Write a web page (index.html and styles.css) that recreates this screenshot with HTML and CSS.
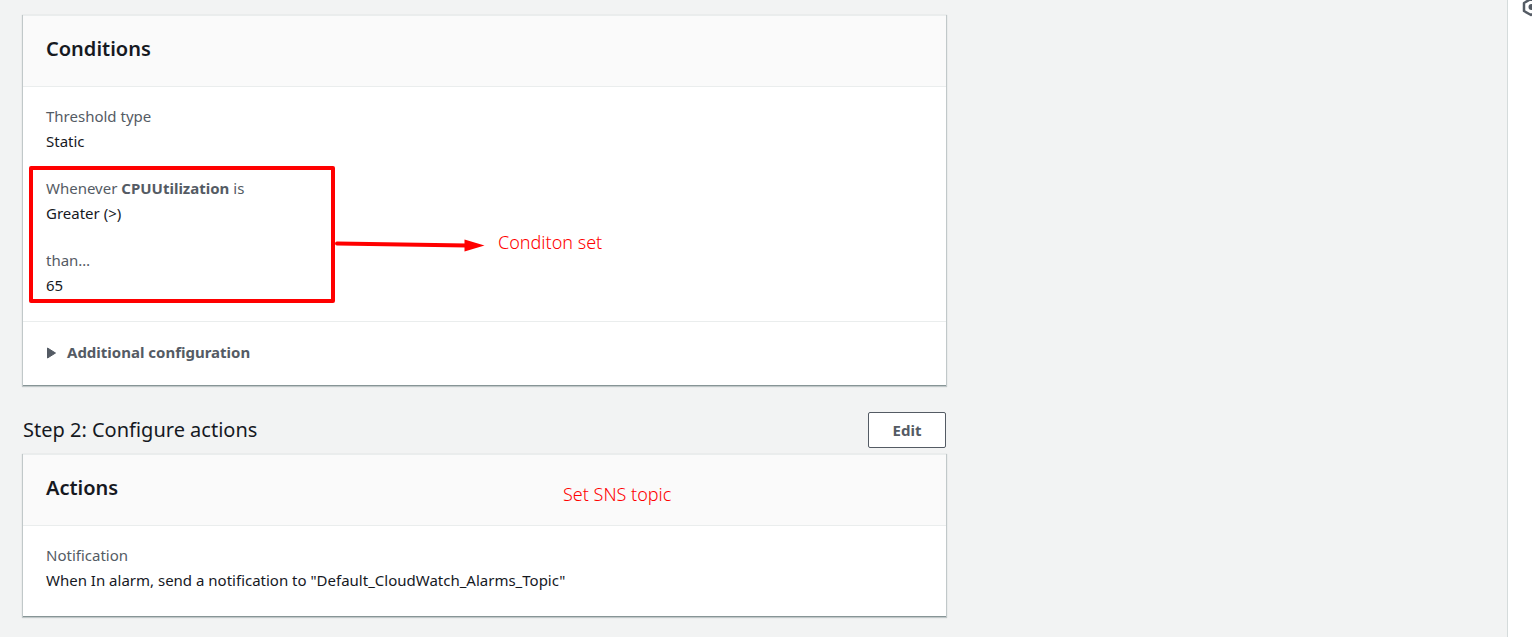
FILE: index.html
```html
<!DOCTYPE html>
<html lang="en">
<head>
<meta charset="utf-8">
<meta name="viewport" content="width=device-width, initial-scale=1">
<title>Create alarm - Preview</title>
<link rel="stylesheet" href="styles.css">
</head>
<body>
<div class="app">
  <main class="main">
    <div class="content">
      <section class="card">
        <header class="card-header"><h3 class="card-title">Conditions</h3></header>
        <div class="card-body">
          <dl class="field">
            <dt>Threshold type</dt>
            <dd>Static</dd>
          </dl>
          <div class="marked">
            <dl class="field">
              <dt>Whenever <strong>CPUUtilization</strong> is</dt>
              <dd>Greater (&gt;)</dd>
            </dl>
            <dl class="field">
              <dt>than…</dt>
              <dd>65</dd>
            </dl>
            <div class="mark-box"></div>
            <div class="callout">
              <svg class="arrow" width="150" height="16" viewBox="0 0 150 16" aria-hidden="true">
                <path d="M2 6.5 L132 8.5" stroke="#f00" stroke-width="4" stroke-linecap="round"/>
                <path d="M129.500 2.500 L149.500 8.500 L129.500 14.500 Z" fill="#f00"/>
              </svg>
              <span class="note">Conditon set</span>
            </div>
          </div>
        </div>
        <div class="card-footer">
          <button class="expander" type="button" aria-expanded="false">
            <svg width="10" height="12" viewBox="0 0 10 12" aria-hidden="true"><path d="M1.500 1 L9.500 6 L1.500 11 Z" fill="#545b64" stroke="#545b64" stroke-linejoin="round"/></svg>
            Additional configuration
          </button>
        </div>
      </section>

      <div class="step">
        <h2 class="step-title">Step 2: Configure actions</h2>
        <button class="button" type="button">Edit</button>
      </div>

      <section class="card">
        <header class="card-header">
          <h3 class="card-title">Actions</h3>
          <span class="note note-topic">Set SNS topic</span>
        </header>
        <div class="card-body">
          <dl class="field">
            <dt>Notification</dt>
            <dd>When In alarm, send a notification to "Default_CloudWatch_Alarms_Topic"</dd>
          </dl>
        </div>
      </section>
    </div>
  </main>
  <aside class="rail">
    <button class="rail-button" type="button" aria-label="Settings">
      <svg width="20" height="20" viewBox="0 0 20 20" fill="none" aria-hidden="true">
        <path d="M10 2 L17 6 V14 L10 18 L3 14 V6 Z" stroke="#545b64" stroke-width="2.500" stroke-linejoin="round"/>
        <circle cx="10.500" cy="10" r="3" fill="#545b64"/>
      </svg>
    </button>
  </aside>
</div>
</body>
</html>
```
FILE: styles.css
```css
* {
  box-sizing: border-box;
}

body {
  margin: 0;
  background: #f2f3f3;
  color: #16191f;
  font: 15px/25px "Noto Sans", "Open Sans", sans-serif;
  overflow: hidden;
}

h2, h3, dl, dd {
  margin: 0;
}

button {
  font: inherit;
  cursor: pointer;
}

.app {
  display: flex;
  min-height: 100vh;
}

.main {
  flex: 1;
  display: grid;
  grid-template-columns: 923fr 538fr;
  padding: 15px 23px 20px;
}

.card {
  background: #fff;
  box-shadow: 0 1px 0 0 #879596, 0 1px 1px 1px rgba(0, 28, 36, 0.2);
  border-top: 1px solid #eaeded;
}

.card-header {
  position: relative;
  padding: 19px 23px 23px;
  background: #fafafa;
  border-bottom: 1px solid #eaeded;
}

.card-title {
  font-size: 20px;
  line-height: 28px;
  font-weight: 600;
}

.card-body {
  display: flex;
  flex-direction: column;
  gap: 22px;
  padding: 17px 23px 23px;
}

.field dt {
  color: #545b64;
}

.marked {
  position: relative;
  display: flex;
  flex-direction: column;
  gap: 22px;
}

.mark-box {
  position: absolute;
  left: -17px;
  top: -10px;
  bottom: -5px;
  width: 306px;
  border: 4px solid #f00;
  border-radius: 2px;
}

.callout {
  position: absolute;
  left: 289px;
  top: 54px;
  display: flex;
  align-items: center;
  gap: 13px;
}

.arrow {
  margin-top: 5px;
}

.note {
  color: #f00;
  font-size: 18px;
  font-weight: 300;
  white-space: nowrap;
}

.note-topic {
  position: absolute;
  left: 540px;
  top: 27px;
}

.card-footer {
  padding: 18px 23px 20px;
  border-top: 1px solid #eaeded;
}

.expander {
  display: flex;
  align-items: center;
  gap: 11px;
  padding: 0;
  border: 0;
  background: none;
  color: #545b64;
  font-weight: 700;
}

.step {
  display: flex;
  align-items: center;
  justify-content: space-between;
  padding: 27px 0 6px;
}

.step-title {
  font-size: 20px;
  line-height: 28px;
  font-weight: 400;
}

.button {
  width: 78px;
  height: 36px;
  padding: 0;
  border: 1px solid #545b64;
  border-radius: 2px;
  background: #fff;
  color: #545b64;
  font-weight: 700;
}

.rail {
  width: 25px;
  overflow: hidden;
  border-left: 1px solid #d5dbdb;
  background: #fff;
}

.rail-button {
  display: flex;
  margin: -3px 0 0 13px;
  padding: 0;
  border: 0;
  background: none;
}
```
